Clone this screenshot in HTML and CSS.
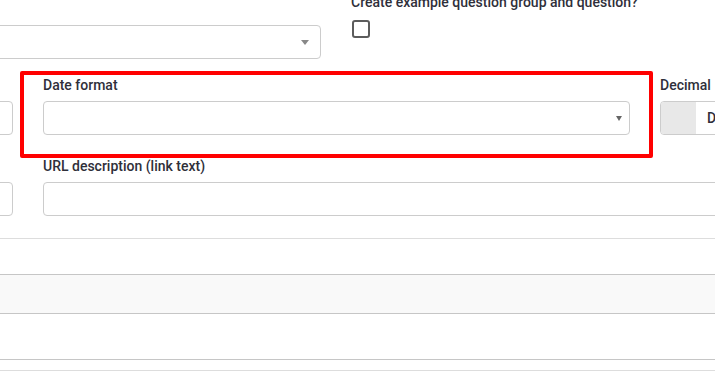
FILE: index.html
```html
<!DOCTYPE html>
<html lang="en">
<head>
  <meta charset="UTF-8">
  <title>Survey settings</title>
  <link rel="stylesheet" href="styles.css">
</head>
<body>
  <main class="page">
    <!-- 上段：グループ選択とサンプル質問 -->
    <div class="form-row">
      <div class="col col-group">
        <label class="field-label">Survey group</label>
        <div class="control select2">
          <span class="caret-select2"></span>
        </div>
      </div>
      <div class="col">
        <label class="field-label spaced">Create example question group and question?</label>
        <span class="checkbox"></span>
      </div>
    </div>

    <!-- 日付形式と小数点 -->
    <div class="form-row row-two">
      <div class="col col-side">
        <label class="field-label">&nbsp;</label>
        <div class="control"></div>
      </div>
      <div class="col col-date highlight">
        <label class="field-label">Date format</label>
        <div class="control native-select">
          <svg class="caret" viewBox="0 0 6 5"><path d="M0 0h6L3 5z" fill="#666"/></svg>
        </div>
      </div>
      <div class="col col-decimal">
        <label class="field-label decimal-label">Decimal mark</label>
        <div class="control btn-group">
          <span class="addon"></span>
          <span class="option">Dot (.)</span>
        </div>
      </div>
    </div>

    <!-- URL説明 -->
    <div class="form-row row-three">
      <div class="col col-side">
        <label class="field-label">&nbsp;</label>
        <div class="control"></div>
      </div>
      <div class="col col-url">
        <label class="field-label">URL description (link text)</label>
        <div class="control"></div>
      </div>
    </div>

    <div class="rule"></div>

    <!-- 下部テーブル -->
    <div class="table">
      <div class="table-row striped"></div>
      <div class="table-row tall"></div>
    </div>
    <div class="rule footer-rule"></div>
  </main>
</body>
</html>
```

FILE: styles.css
```css
/* Reset */
* { box-sizing: border-box; }

html, body {
  margin: 0;
  height: 100%;
  overflow: hidden;
  background: #fff;
  color: #2f2f3a;
  font-family: Roboto, "Liberation Sans", Arial, sans-serif;
}

.page {
  margin: -8px 0 0 -200px;
  width: 1300px;
}

/* フォーム行 */
.form-row {
  display: flex;
  gap: 30px;
}

.row-two { margin-top: 16px; }
.row-three { margin-top: 21px; }

.col-group { width: 521px; }
.col-side { width: 213px; }
.col-date { width: 587px; }
.col-decimal { width: 300px; }
.col-url { width: 900px; }

.field-label {
  display: block;
  font-size: 14px;
  font-weight: 500;
  line-height: 20px;
  margin-bottom: 6px;
  white-space: nowrap;
}

.field-label.spaced { margin-bottom: 8px; }
.decimal-label { word-spacing: 3px; }

.control {
  height: 34px;
  border: 1px solid #cccccc;
  border-radius: 4px;
  background: #fff;
}

/* select2風 */
.select2 {
  margin-top: 13px;
  display: flex;
  align-items: center;
  justify-content: flex-end;
  padding-right: 11px;
}

.caret-select2 {
  width: 0;
  height: 0;
  border-left: 4px solid transparent;
  border-right: 4px solid transparent;
  border-top: 5px solid #888;
}

.native-select {
  display: flex;
  align-items: center;
  justify-content: flex-end;
  padding-right: 7px;
}

.caret {
  width: 6px;
  height: 5px;
}

/* チェックボックス */
.checkbox {
  display: block;
  width: 18px;
  height: 18px;
  margin-left: 1px;
  border: 2px solid #5c5c5c;
  border-radius: 3px;
}

/* 小数点ボタン */
.btn-group {
  display: flex;
  align-items: center;
  overflow: hidden;
}

.addon {
  width: 35px;
  height: 100%;
  background: #e8e8e8;
}

.option {
  padding-left: 11px;
  font-size: 14px;
  font-weight: 500;
}

/* 強調枠 */
.highlight { position: relative; }

.highlight::after {
  content: "";
  position: absolute;
  top: -4px;
  left: -23px;
  right: -23px;
  bottom: -23px;
  border: 4px solid #ff0000;
  border-radius: 2px;
  pointer-events: none;
}

/* 区切り線 */
.rule {
  height: 1px;
  margin-top: 22px;
  background: #dddddd;
}

.table {
  margin-top: 35px;
  border-top: 1px solid #c6c6c6;
}

.table-row {
  height: 39px;
  border-bottom: 1px solid #c6c6c6;
}

.table-row.striped { background: #f9f9f9; }
.table-row.tall { height: 46px; }

.footer-rule { margin-top: 10px; }
```
